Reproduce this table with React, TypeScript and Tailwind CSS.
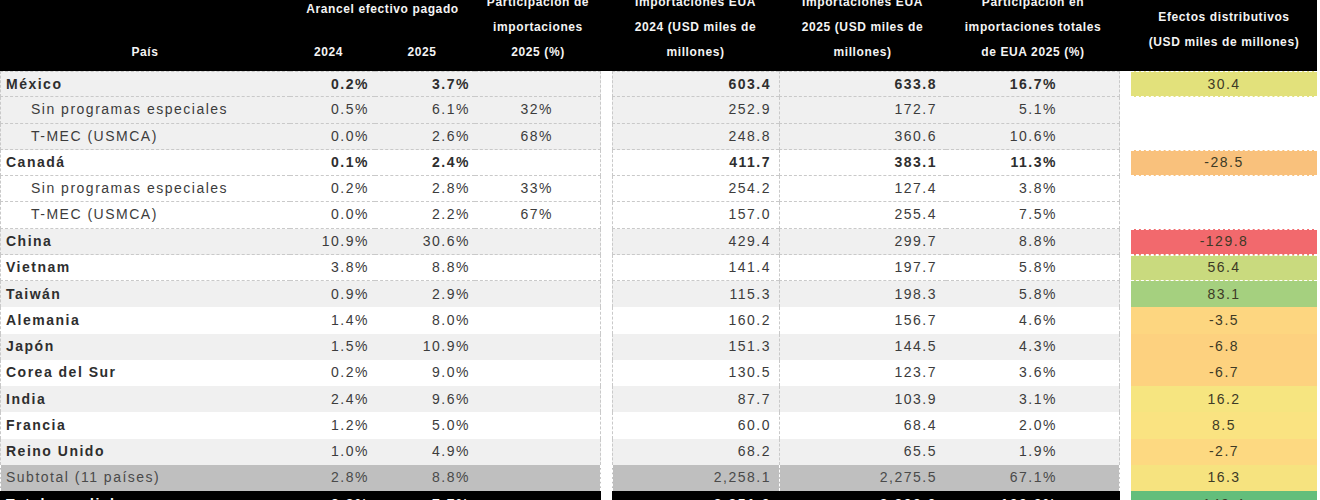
import React from 'react';

const GRID = 'grid grid-cols-[290px_85px_100px_126px_11px_167px_167px_174px_11px_186px]';

interface Row {
  name: string;
  sub?: boolean;
  bold?: boolean;
  a24: string;
  a25: string;
  part?: string;
  i24: string;
  i25: string;
  share: string;
  eff?: string;
  effBg?: string;
  bg: string;
  line?: string;
  text?: string;
  dashed?: boolean;
  first?: boolean;
}

const GRAY = 'bg-[#f0f0f0]';
const WHITE = 'bg-white';

const rows: Row[] = [
  { name: 'México', bold: true, a24: '0.2%', a25: '3.7%', i24: '603.4', i25: '633.8', share: '16.7%', eff: '30.4', effBg: 'bg-[#e2e17b]', bg: GRAY, dashed: true, first: true },
  { name: 'Sin programas especiales', sub: true, a24: '0.5%', a25: '6.1%', part: '32%', i24: '252.9', i25: '172.7', share: '5.1%', bg: GRAY, dashed: true },
  { name: 'T-MEC (USMCA)', sub: true, a24: '0.0%', a25: '2.6%', part: '68%', i24: '248.8', i25: '360.6', share: '10.6%', bg: GRAY, dashed: true },
  { name: 'Canadá', bold: true, a24: '0.1%', a25: '2.4%', i24: '411.7', i25: '383.1', share: '11.3%', eff: '-28.5', effBg: 'bg-[#f9c17c]', bg: WHITE, dashed: true },
  { name: 'Sin programas especiales', sub: true, a24: '0.2%', a25: '2.8%', part: '33%', i24: '254.2', i25: '127.4', share: '3.8%', bg: WHITE, dashed: true },
  { name: 'T-MEC (USMCA)', sub: true, a24: '0.0%', a25: '2.2%', part: '67%', i24: '157.0', i25: '255.4', share: '7.5%', bg: WHITE, dashed: true },
  { name: 'China', a24: '10.9%', a25: '30.6%', i24: '429.4', i25: '299.7', share: '8.8%', eff: '-129.8', effBg: 'bg-[#f2696d]', bg: GRAY, dashed: true },
  { name: 'Vietnam', a24: '3.8%', a25: '8.8%', i24: '141.4', i25: '197.7', share: '5.8%', eff: '56.4', effBg: 'bg-[#c9da7e]', bg: WHITE, dashed: true },
  { name: 'Taiwán', a24: '0.9%', a25: '2.9%', i24: '115.3', i25: '198.3', share: '5.8%', eff: '83.1', effBg: 'bg-[#a5d07f]', bg: GRAY },
  { name: 'Alemania', a24: '1.4%', a25: '8.0%', i24: '160.2', i25: '156.7', share: '4.6%', eff: '-3.5', effBg: 'bg-[#fdd680]', bg: WHITE },
  { name: 'Japón', a24: '1.5%', a25: '10.9%', i24: '151.3', i25: '144.5', share: '4.3%', eff: '-6.8', effBg: 'bg-[#fdd17f]', bg: GRAY },
  { name: 'Corea del Sur', a24: '0.2%', a25: '9.0%', i24: '130.5', i25: '123.7', share: '3.6%', eff: '-6.7', effBg: 'bg-[#fdd27f]', bg: WHITE },
  { name: 'India', a24: '2.4%', a25: '9.6%', i24: '87.7', i25: '103.9', share: '3.1%', eff: '16.2', effBg: 'bg-[#f6e580]', bg: GRAY },
  { name: 'Francia', a24: '1.2%', a25: '5.0%', i24: '60.0', i25: '68.4', share: '2.0%', eff: '8.5', effBg: 'bg-[#fae381]', bg: WHITE },
  { name: 'Reino Unido', a24: '1.0%', a25: '4.9%', i24: '68.2', i25: '65.5', share: '1.9%', eff: '-2.7', effBg: 'bg-[#fdd981]', bg: GRAY },
  { name: 'Subtotal (11 países)', a24: '2.8%', a25: '8.8%', i24: '2,258.1', i25: '2,275.5', share: '67.1%', eff: '16.3', effBg: 'bg-[#f6e37f]', bg: 'bg-[#bfbfbf]', line: 'border-white', text: 'text-[#4a4a4a] font-normal' },
  { name: 'Total mundial', bold: true, a24: '2.3%', a25: '7.7%', i24: '3,351.0', i25: '3,390.9', share: '100.0%', eff: '149.4', effBg: 'bg-[#63be7b]', bg: 'bg-black', line: 'border-black', text: 'text-white font-bold' },
];

function DataRow({ r }: { r: Row }) {
  const color = r.line ?? 'border-[#c9c9c9]';
  const horiz = r.dashed ? (r.first ? 'border-y' : 'border-b') : '';
  const txt = r.text ?? (r.sub ? 'text-[#3c3c3c] font-normal' : 'text-[#2e2e2e] font-bold');
  const valTxt = r.text ?? (r.bold ? 'text-[#2e2e2e] font-bold' : 'text-[#3c3c3c] font-normal');
  const cell = `${r.bg} ${horiz} border-dashed ${color} flex items-center`;
  const effLine = r.dashed ? 'border-y border-dashed border-white' : '';
  return (
    <div className={`${GRID} h-[26.25px]`}>
      <div className={`${cell} border-l ${txt} ${r.sub ? 'pl-[30px]' : 'pl-[5px]'}`}>{r.name}</div>
      <div className={`${cell} ${valTxt} justify-end pr-[6px]`}>{r.a24}</div>
      <div className={`${cell} ${valTxt} justify-end pr-[5px]`}>{r.a25}</div>
      <div className={`${cell} border-r ${valTxt} justify-end pr-[47px]`}>{r.part}</div>
      <div />
      <div className={`${cell} border-l ${valTxt} justify-end pr-[8px]`}>{r.i24}</div>
      <div className={`${cell} border-l ${valTxt} justify-end pr-[9px]`}>{r.i25}</div>
      <div className={`${cell} border-r ${valTxt} justify-end pr-[62px]`}>{r.share}</div>
      <div />
      <div
        className={`${r.eff ? r.effBg : 'bg-white'} ${r.eff ? effLine : ''} flex items-center justify-center text-[#3d3a26] font-normal`}
      >
        {r.eff}
      </div>
    </div>
  );
}

function Header() {
  return (
    <div className="h-[71px] overflow-hidden">
      <div className={`${GRID} grid-rows-[71px] h-[71px] text-[#f4f4f4] font-bold text-[12px] tracking-[0.6px] leading-[25px]`}>
        <div className="bg-black min-h-0 flex items-end justify-center pb-[6px]">País</div>
        <div className="bg-black min-h-0 col-span-2 flex flex-col justify-between pb-[6px]">
          <div className="text-center -mt-[3px]">Arancel efectivo pagado</div>
          <div className="grid grid-cols-[85px_100px]">
            <div className="text-center pr-[8px]">2024</div>
            <div className="text-center pr-[6px]">2025</div>
          </div>
        </div>
        <div className="bg-black min-h-0 flex flex-col items-center justify-end pb-[6px]">
          <span className="shrink-0">Participación de</span>
          <span className="shrink-0">importaciones</span>
          <span className="shrink-0">2025 (%)</span>
        </div>
        <div className="bg-black" />
        <div className="bg-black min-h-0 flex flex-col items-center justify-end pb-[6px]">
          <span className="shrink-0">Importaciones EUA</span>
          <span className="shrink-0">2024 (USD miles de</span>
          <span className="shrink-0">millones)</span>
        </div>
        <div className="bg-black min-h-0 flex flex-col items-center justify-end pb-[6px]">
          <span className="shrink-0">Importaciones EUA</span>
          <span className="shrink-0">2025 (USD miles de</span>
          <span className="shrink-0">millones)</span>
        </div>
        <div className="bg-black min-h-0 flex flex-col items-center justify-end pb-[6px]">
          <span className="shrink-0">Participación en</span>
          <span className="shrink-0">importaciones totales</span>
          <span className="shrink-0">de EUA 2025 (%)</span>
        </div>
        <div className="bg-black" />
        <div className="bg-black min-h-0 flex flex-col items-center justify-start pt-[5px]">
          <span>Efectos distributivos</span>
          <span>(USD miles de millones)</span>
        </div>
      </div>
    </div>
  );
}

export default function App() {
  return (
    <div
      className="w-[1320px] h-[500px] overflow-hidden bg-white text-[14px] tracking-[1.5px]"
      style={{ fontFamily: '"Liberation Sans", Arial, sans-serif' }}
    >
      <Header />
      {rows.map((r, i) => (
        <DataRow key={i} r={r} />
      ))}
    </div>
  );
}
